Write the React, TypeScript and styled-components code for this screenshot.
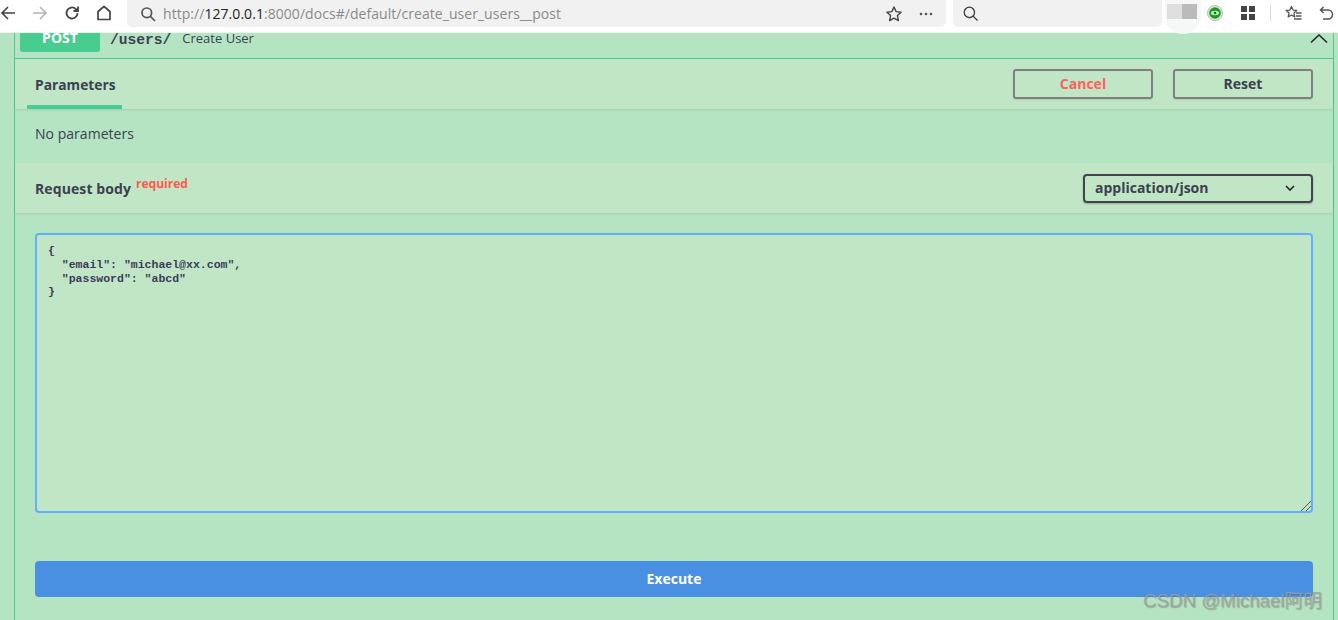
import React from "react";
import styled, { createGlobalStyle } from "styled-components";

const Global = createGlobalStyle`
  html, body { margin: 0; padding: 0; width: 1338px; height: 620px; overflow: hidden; background: #c1e6c5; }
  * { box-sizing: border-box; }
`;
const Page = styled.div`
  position: relative; width: 1338px; height: 620px; overflow: hidden;
  display: flex; flex-direction: column; background: #c1e6c5;
  font-family: "Open Sans", "Liberation Sans", sans-serif; color: #3b4151;
`;
const Chrome = styled.div`
  height: 33px; flex: none; background: #fff; display: flex; align-items: flex-start;
  position: relative; border-bottom: 1px solid #eef5ef;
`;
const NavIcon = styled.svg<{ $w: number; $ml: number; $mt?: number }>`
  flex: none; width: ${p => p.$w}px; height: ${p => p.$w}px;
  margin-left: ${p => p.$ml}px; margin-top: ${p => p.$mt ?? 5}px; display: block; fill: none;
  stroke: currentColor; color: #555;
`;
const UrlBox = styled.div`
  width: 819px; height: 27px; margin-left: 15px; background: #f1f1f1; border-radius: 0 0 6px 6px;
  display: flex; align-items: center; padding-left: 13px; flex: none;
`;
const UrlText = styled.div`
  margin-left: 7px; font: 14px/18px "Open Sans", sans-serif; color: #8a8a8a; flex: 1; letter-spacing: .05px;
  b { font-weight: 400; color: #222; }
`;
const SearchBox = styled.div`
  width: 209px; height: 27px; margin-left: 7px; background: #f1f1f1; border-radius: 0 0 6px 6px;
  display: flex; align-items: center; padding-left: 10px; flex: none;
`;
const Blur = styled.div`
  position: absolute; left: 1165px; top: 0; width: 36px; height: 34px; border-radius: 0 0 18px 18px; background: #f5f8f6;
`;
const BlurA = styled.div`
  position: absolute; left: 1167px; top: 4px; width: 15px; height: 15px; background: #dedede;
`;
const BlurB = styled.div`
  position: absolute; left: 1182px; top: 4px; width: 15px; height: 15px; background: #bbb;
`;
const Ext = styled.svg`
  position: absolute; left: 1207px; top: 5px; width: 16px; height: 16px;
`;
const Tool = styled.svg<{ $x: number; $s: number; $y: number }>`
  position: absolute; left: ${p => p.$x}px; top: ${p => p.$y}px; width: ${p => p.$s}px; height: ${p => p.$s}px; fill: none; color: #555; stroke: currentColor;
`;
const Sep = styled.div`
  position: absolute; left: 1270px; top: 5px; width: 1px; height: 16px; background: #ddd;
`;
const Outer = styled.div`
  flex: 1; padding: 0 4px 0 14px; display: flex; min-height: 0; background: #b5e4c3;
`;
const Block = styled.div`
  flex: 1; display: flex; flex-direction: column; border-left: 1px solid #49cc90; border-right: 1px solid #49cc90;
  background: #b5e4c3; min-width: 0;
`;
const Summary = styled.div`
  height: 26px; flex: none; display: flex; align-items: flex-start; border-bottom: 1px solid #49cc90; padding-left: 5px; position: relative;
`;
const Method = styled.div`
  width: 80px; height: 19px; background: #49cc90; border-radius: 0 0 3px 3px; color: #fff;
  font: 700 14px/10px "Open Sans", sans-serif; text-align: center;
`;
const Path = styled.span`
  margin-left: 10px; font: 700 14.600px/12px "Liberation Mono", monospace; color: #3b4151; margin-top: 1px;
`;
const Desc = styled.span`
  margin-left: 11px; font: 400 13px/10px "Open Sans", sans-serif; color: #3b4151;
`;
const Chevron = styled.svg`
  position: absolute; right: 5px; top: 0; width: 18px; height: 10px; fill: none; stroke: #222; stroke-width: 1.5;
`;
const TabBar = styled.div`
  height: 50px; flex: none; background: #c1e6c5; display: flex; align-items: stretch; padding: 0 20px 0 12px;
  justify-content: space-between; box-shadow: 0 1px 2px rgba(0,0,0,.1);
  position: relative;
`;
const Tab = styled.div`
  width: 95px; border-bottom: 4px solid #49cc90; font: 700 13.800px/19px "Open Sans", sans-serif; padding: 16px 0 0 8px; height: 50px;
`;
const Actions = styled.div`
  display: flex; gap: 20px; padding-top: 10px;
`;
const OutlineBtn = styled.div<{ $red?: boolean }>`
  width: 140px; height: 30px; border: 2px solid #808080; border-radius: 3px; text-align: center;
  font: 700 14px/26px "Open Sans", sans-serif; color: ${p => (p.$red ? "#ff6060" : "#3b4151")};
  box-shadow: 0 1px 2px rgba(0,0,0,.1);
`;
const ParamRow = styled.div`
  height: 54px; flex: none; padding: 15px 20px 0; font: 400 14px/19px "Open Sans", sans-serif; letter-spacing: .03px;
`;
const BodyHead = styled.div`
  height: 50px; flex: none; background: #c1e6c5; box-shadow: 0 1px 2px rgba(0,0,0,.1); display: flex; justify-content: space-between;
  padding: 0 20px; position: relative;
`;
const BodyTitle = styled.div`
  font: 700 14px/19px "Open Sans", sans-serif; padding-top: 16px; letter-spacing: .1px;
`;
const Req = styled.sup`
  font: 700 12px/12px "Open Sans", sans-serif; color: #ff5a50; position: relative; top: -6px; vertical-align: baseline; margin-left: 5px;
  letter-spacing: 0;
`;
const Select = styled.div`
  margin-top: 11px; width: 230px; height: 29px; border: 2px solid #41444e; border-radius: 4px; display: flex; align-items: center;
  justify-content: space-between; padding: 0 16px 2px 10px; font: 700 14px/19px "Open Sans", sans-serif; box-shadow: 0 1px 2px rgba(0,0,0,.25);
`;
const Caret = styled.svg`
  width: 10px; height: 6px; fill: none; stroke: #222; stroke-width: 1.6;
`;
const EditArea = styled.div`
  padding: 20px 20px 0; flex: none;
`;
const Code = styled.div`
  height: 280px; background: #c1e6c5; border: 2px solid #61affe; border-radius: 4px; padding: 9px 11px; position: relative;
  font: 700 11.500px/13.800px "Liberation Mono", monospace; color: #3b3a5a; white-space: pre;
`;
const Grip = styled.svg`
  position: absolute; right: 0; bottom: 0; width: 10px; height: 10px; stroke: #555; stroke-width: 1; fill: none;
`;
const Exec = styled.div`
  margin: 48px 20px 0; height: 36px; background: #4a90e2; border-radius: 4px; color: #fff; text-align: center;
  font: 700 14px/36px "Open Sans", sans-serif; flex: none;
`;
const Mark = styled.div`
  position: absolute; left: 1143px; top: 589px; font: 400 18.700px/24px "Liberation Sans", "Noto Sans CJK SC", sans-serif;
  color: rgba(160,160,160,.8); text-shadow: 1px 1px 1px rgba(70,70,70,.35); white-space: nowrap;
`;

export default function App() {
  return (
    <Page>
      <Global />
      <Chrome>
        <NavIcon $w={16} $ml={0} viewBox="0 0 16 16" strokeWidth={1.6} style={{ color: "#444" }}>
          <path d="M15 8H2M8 2L2 8l6 6" />
        </NavIcon>
        <NavIcon $w={16} $ml={16} viewBox="0 0 16 16" strokeWidth={1.6} style={{ color: "#b5b5b5" }}>
          <path d="M1 8h13M8 2l6 6-6 6" />
        </NavIcon>
        <NavIcon $w={16} $ml={16} viewBox="0 0 16 16" strokeWidth={1.8} style={{ color: "#444" }}>
          <path d="M13.500 8a5.500 5.500 0 1 1-1.700-4L13.500 5.500" />
          <path d="M14 1.500v4.500H9.500" />
        </NavIcon>
        <NavIcon $w={16} $ml={16} viewBox="0 0 16 16" strokeWidth={1.7} style={{ color: "#444" }}>
          <path d="M2 14.500V6.500L8 1.500l6 5v8z" strokeLinejoin="round" />
        </NavIcon>
        <UrlBox>
          <svg width="16" height="16" viewBox="0 0 16 16" fill="none" stroke="#555" strokeWidth="1.700">
            <circle cx="6.800" cy="6.800" r="4.800" />
            <path d="M10.400 10.400L15 15" />
          </svg>
          <UrlText>http://<b>127.0.0.1</b>:8000/docs#/default/create_user_users__post</UrlText>
          <svg width="18" height="18" viewBox="0 0 18 18" fill="none" stroke="#444" strokeWidth="1.400" style={{ marginRight: 16 }}>
            <path d="M9 2l2.100 4.600 5 .6-3.700 3.400 1 5L9 13.100l-4.400 2.500 1-5L1.900 7.200l5-.6z" strokeLinejoin="round" />
          </svg>
          <svg width="14" height="4" viewBox="0 0 14 4" fill="#555" style={{ marginRight: 13 }}>
            <circle cx="2" cy="2" r="1.300" /><circle cx="7" cy="2" r="1.300" /><circle cx="12" cy="2" r="1.300" />
          </svg>
        </UrlBox>
        <SearchBox>
          <svg width="15" height="15" viewBox="0 0 16 16" fill="none" stroke="#333" strokeWidth="1.300">
            <circle cx="6.800" cy="6.800" r="5.500" />
            <path d="M10.800 10.800L15.500 15.500" />
          </svg>
        </SearchBox>
        <Blur /><BlurA /><BlurB />
        <Ext viewBox="0 0 16 16">
          <circle cx="8" cy="8" r="7.500" fill="#e4e4e4" stroke="#bbb" strokeWidth="1" />
          <circle cx="8" cy="8" r="5.800" fill="#1c9b1c" />
          <ellipse cx="8" cy="8" rx="4" ry="2.200" fill="#bff0bf" />
          <circle cx="8" cy="8" r="1.300" fill="#127012" />
        </Ext>
        <Tool $x={1241} $y={6} $s={14} viewBox="0 0 14 14" style={{ stroke: "none" }}>
          <path fill="#444" d="M0 0h6v6H0zM8 0h6v6H8zM0 8h6v6H0zM8 8h6v6H8z" />
        </Tool>
        <Sep />
        <Tool $x={1285} $y={5} $s={17} viewBox="0 0 17 17" strokeWidth={1.300}>
          <path d="M6.500 1.500l1.600 3.600 3.700.4-2.800 2.600.8 3.800-3.300-1.900-3.300 1.900.8-3.800L1.200 5.500l3.700-.4z" strokeLinejoin="round" />
          <path d="M11 8h5.500M11 11h5.500M9 14h7.500" />
        </Tool>
        <Tool $x={1319} $y={6} $s={15} viewBox="0 0 15 15" strokeWidth={1.500}>
          <path d="M4.500 1L1.500 4l3 3M1.500 4H9a4.500 4.500 0 0 1 0 9H4" />
        </Tool>
      </Chrome>
      <Outer>
        <Block>
          <Summary>
            <Method>POST</Method>
            <Path>/users/</Path>
            <Desc>Create User</Desc>
            <Chevron viewBox="0 0 18 10"><path d="M1 9.500L9 2l8 7.500" /></Chevron>
          </Summary>
          <TabBar>
            <Tab>Parameters</Tab>
            <Actions>
              <OutlineBtn $red>Cancel</OutlineBtn>
              <OutlineBtn>Reset</OutlineBtn>
            </Actions>
          </TabBar>
          <ParamRow>No parameters</ParamRow>
          <BodyHead>
            <BodyTitle>Request body<Req>required</Req></BodyTitle>
            <Select>
              application/json
              <Caret viewBox="0 0 10 6"><path d="M1 1l4 4 4-4" /></Caret>
            </Select>
          </BodyHead>
          <EditArea>
            <Code>
              {'{\n  "email": "michael@xx.com",\n  "password": "abcd"\n}'}
              <Grip viewBox="0 0 10 10"><path d="M0 10L10 0M5 10L10 5" /></Grip>
            </Code>
          </EditArea>
          <Exec>Execute</Exec>
        </Block>
      </Outer>
      <Mark>CSDN @Michael阿明</Mark>
    </Page>
  );
}
